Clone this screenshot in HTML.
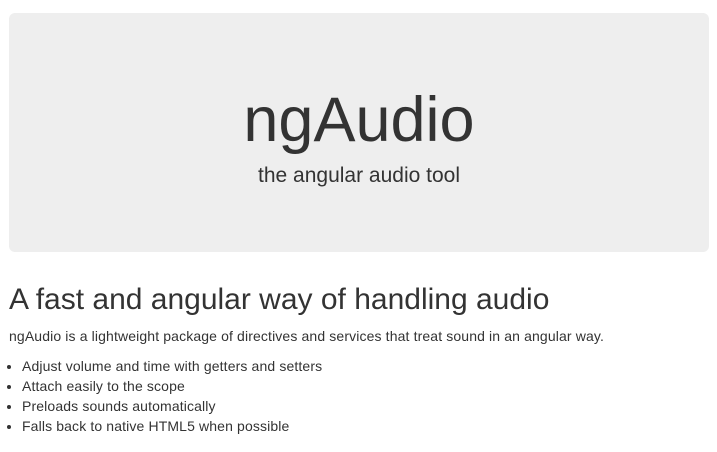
<!DOCTYPE html>
<html><head><meta charset="utf-8"><style>
body{margin:0;background:#fff;font-family:"Liberation Sans",Arial,sans-serif;color:#333;font-size:14px;line-height:20px;width:717px;height:452px;overflow:hidden}
.j{position:absolute;left:9px;top:13px;width:700px;height:239px;background:#eee;border-radius:6px;text-align:center}
.j h1{position:absolute;left:0;right:0;top:76px;margin:0;font-size:63px;font-weight:normal;line-height:63px;color:#333}
.j p{position:absolute;left:0;right:0;top:151px;margin:0;font-size:21px;line-height:24px}
h2{position:absolute;left:9px;top:283px;margin:0;font-size:30px;font-weight:normal;line-height:33px}
.p{position:absolute;left:9px;top:326px;margin:0;letter-spacing:0.13px}
ul{position:absolute;left:9px;top:356px;margin:0;padding-left:13px;letter-spacing:0.13px}
li{line-height:20px}
</style></head><body>
<div class="j"><h1>ngAudio</h1><p>the angular audio tool</p></div>
<h2>A fast and angular way of handling audio</h2>
<p class="p">ngAudio is a lightweight package of directives and services that treat sound in an angular way.</p>
<ul><li>Adjust volume and time with getters and setters</li><li>Attach easily to the scope</li><li>Preloads sounds automatically</li><li>Falls back to native HTML5 when possible</li></ul>
</body></html>
